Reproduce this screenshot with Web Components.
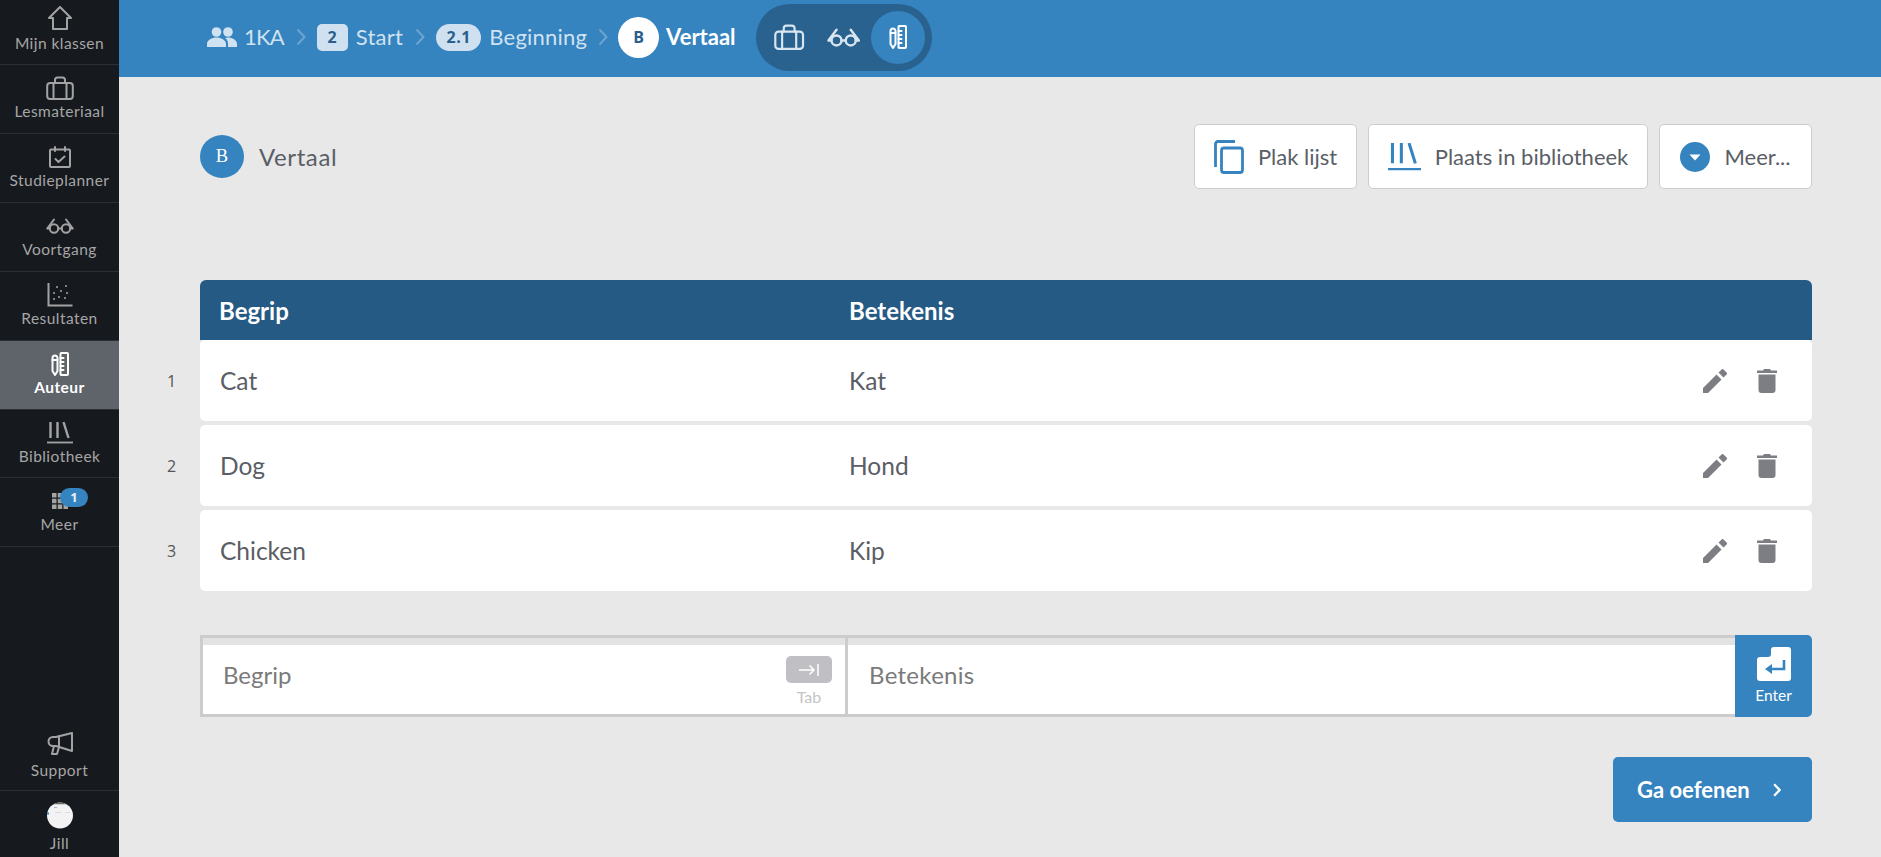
<!DOCTYPE html>
<html lang="nl"><head><meta charset="utf-8"><title>Vertaal</title>
<style>
html,body{margin:0;height:100%;overflow:hidden}
body{font-family:Lato,"Noto Sans",sans-serif;background:#e8e8e8}
</style></head><body>
<app-shell>
  <side-nav slot="nav">
    <nav-item icon="home" label="Mijn klassen" h="65" ih="36" lm="-3"></nav-item>
    <nav-item icon="case" label="Lesmateriaal"></nav-item>
    <nav-item icon="cal" label="Studieplanner"></nav-item>
    <nav-item icon="glasses" label="Voortgang"></nav-item>
    <nav-item icon="chart" label="Resultaten"></nav-item>
    <nav-item icon="ruler" label="Auteur" active></nav-item>
    <nav-item icon="lib" label="Bibliotheek" h="68"></nav-item>
    <nav-item icon="grid" label="Meer" badge="1"></nav-item>
    <nav-item slot="bottom" icon="mega" label="Support" h="70" ih="44" lm="-5"></nav-item>
    <nav-item slot="bottom" icon="avatar" label="Jill" h="66" ih="48" lm="-6" plain></nav-item>
  </side-nav>
  <top-bar slot="top">
    <bread-crumb icon="people" label="1KA"></bread-crumb>
    <bread-crumb badge="2" label="Start" sep></bread-crumb>
    <bread-crumb badge="2.1" round label="Beginning" sep></bread-crumb>
    <bread-crumb circle="B" label="Vertaal" sep current></bread-crumb>
    <mode-switch></mode-switch>
  </top-bar>
  <page-head>
    <tool-button icon="copy" label="Plak lijst" w="163"></tool-button>
    <tool-button icon="lib" label="Plaats in bibliotheek" w="280"></tool-button>
    <tool-button icon="more" label="Meer..." w="153"></tool-button>
  </page-head>
  <word-table>
    <word-row n="1" term="Cat" meaning="Kat"></word-row>
    <word-row n="2" term="Dog" meaning="Hond"></word-row>
    <word-row n="3" term="Chicken" meaning="Kip"></word-row>
  </word-table>
  <entry-bar></entry-bar>
  <go-button></go-button>
</app-shell>
<script>
const S='fill="none" stroke="currentColor" stroke-width="2" stroke-linejoin="round" stroke-linecap="round"';
const ICONS={
home:[24,24,`<path ${S} d="M12 1 L23 12 H19 V23 H5 V12 H1 Z"/>`],
case:[28,24,`<g ${S}><rect x="1.2" y="7" width="25.6" height="16" rx="3"/><path d="M9 7V4a2.5 2.5 0 0 1 2.500-2.500h5A2.500 2.500 0 0 1 19 4v3M7.500 7v16M20.500 7v16"/></g>`],
cal:[22,22,`<g ${S} stroke-width="1.600"><rect x="1" y="3.500" width="20" height="17.500" rx="1"/><path d="M6 1v4M16 1v4M6.500 13l3 3 6-5.500"/></g>`],
glasses:[28,16,`<g ${S} stroke-width="1.800"><circle cx="8" cy="10.500" r="4.200"/><circle cx="20" cy="10.500" r="4.200"/><path d="M12.200 10.500h3.600M3.800 10.500H1.200L8 1.500M24.200 10.500h2.600L20 1.500"/></g>`],
chart:[26,24,`<path fill="none" stroke="currentColor" stroke-width="2" d="M1.500 0V22.500H25.500"/><g fill="currentColor"><circle cx="10" cy="4" r="1"/><circle cx="19" cy="3" r="1"/><circle cx="14" cy="8" r="1"/><circle cx="7" cy="10" r="1"/><circle cx="20" cy="10" r="1"/><circle cx="12" cy="14" r="1"/><circle cx="7" cy="16" r="1"/><circle cx="18" cy="15" r="1"/></g>`],
ruler:[18,24,`<g ${S} stroke-width="1.800"><path d="M1.500 6a2.500 2.500 0 0 1 5 0V19L4 23 1.500 19Z"/><path d="M1.500 8h5"/><rect x="9.500" y="1" width="7.500" height="22" rx=".8"/><path d="M9.500 6h3M9.500 10h3M9.500 14h3M9.500 18h3"/></g>`],
lib:[26,22,`<path fill="none" stroke="currentColor" stroke-width="2.400" d="M3.500 0V16M10.500 0V16M16.500 0L21.500 16"/><path fill="none" stroke="currentColor" stroke-width="1.800" d="M0 20.500H26"/>`],
grid:[16,16,`<g fill="currentColor"><rect width="4.500" height="4.500"/><rect x="5.750" width="4.500" height="4.500"/><rect x="11.500" width="4.500" height="4.500"/><rect y="5.750" width="4.500" height="4.500"/><rect x="5.750" y="5.750" width="4.500" height="4.500"/><rect x="11.500" y="5.750" width="4.500" height="4.500"/><rect y="11.500" width="4.500" height="4.500"/><rect x="5.750" y="11.500" width="4.500" height="4.500"/><rect x="11.500" y="11.500" width="4.500" height="4.500"/></g>`],
mega:[26,23,`<g ${S} stroke-width="2"><path d="M25 1V19L9 14H6A4.500 4.500 0 0 1 6 5H9Z"/><path d="M12 4V15M7 14 5 22H10L12 15"/></g>`],
people:[30,20,`<g fill="currentColor"><circle cx="9.500" cy="5" r="4.800"/><circle cx="21" cy="5" r="4.800"/><path d="M0 20v-3c0-4 5-6.500 9.500-6.500S19 13 19 17v3Z"/><path d="M21 20v-3.500c0-2.200-1-4.200-3-5.500 1-.3 2-.5 3-.5 4.200 0 9 2.500 9 6.500v3Z"/></g>`],
copy:[30,34,`<g fill="none" stroke="currentColor" stroke-width="2.800"><path d="M1.500 27V4a2.500 2.500 0 0 1 2.500-2.500H21"/><rect x="7.500" y="8" width="21" height="24.500" rx="2.500"/></g>`],
more:[30,30,`<circle cx="15" cy="15" r="15" fill="currentColor"/><path d="M9.500 12.500h11L15 18.500Z" fill="#fff"/>`],
pencil:[24,24,`<path fill="currentColor" d="M0 19V24H5L18.500 10.500 13.500 5.500ZM23.600 5.400a1.300 1.300 0 0 0 0-1.900L20.500.4a1.300 1.300 0 0 0-1.900 0L15.500 3.500l5 5Z"/>`],
trash:[20,24,`<path fill="currentColor" d="M7 0h6l1 1.500h6V4H0V1.500h6ZM1.500 5.500h17V21a3 3 0 0 1-3 3h-11a3 3 0 0 1-3-3Z"/>`],
tab:[20,12,`<path fill="none" stroke="currentColor" stroke-width="1.500" d="M0 6H15M10.500 1.500 15 6l-4.500 4.500M19 0V12"/>`],
enter:[34,34,`<path fill="#fff" d="M14 3a3 3 0 0 1 3-3H31a3 3 0 0 1 3 3V31a3 3 0 0 1-3 3H3a3 3 0 0 1-3-3V13a3 3 0 0 1 3-3H11a3 3 0 0 0 3-3Z"/><path fill="none" stroke="#3583bf" stroke-width="2.600" d="M27 13V22H11"/><path fill="#3583bf" d="M15 17V27L8 22Z"/>`],
chev:[10,18,`<path fill="none" stroke="currentColor" stroke-width="2" d="M1.500 1.500 8.500 9 1.500 16.500"/>`],
chevb:[10,18,`<path fill="none" stroke="currentColor" stroke-width="3" d="M1.500 1.500 8.500 9 1.500 16.500"/>`],
avatar:[26,27,`<circle cx="13" cy="13.500" r="13" fill="#f3f3f3"/><path d="M6.500 2.300A13 13 0 0 1 19.500 2.300Z" fill="#6a6a6a"/><rect x="7" y="5" width="3" height="1" fill="#9dbcd8"/><rect x="8" y="10" width="6" height="1" fill="#d5dfea"/><rect x="18" y="10" width="5" height="1" fill="#d5dfea"/><rect x="0" y="10.500" width="2" height="2" fill="#3583bf"/>`]
};
const svg=(n,h)=>{const[w,ih,b]=ICONS[n];const H=h||ih;return `<svg xmlns="http://www.w3.org/2000/svg" viewBox="0 0 ${w} ${ih}" width="${w*H/ih}" height="${H}" style="display:block;flex:none" aria-hidden="true">${b}</svg>`};
function def(name,render){customElements.define(name,class extends HTMLElement{constructor(){super();this.attachShadow({mode:'open'})}connectedCallback(){this.shadowRoot.innerHTML=render(this)}})}

def('app-shell',()=>`<style>
:host{display:grid;grid-template-columns:119px 1fr;grid-template-rows:77px 1fr;width:100vw;height:100vh;overflow:hidden}
::slotted([slot=nav]){grid-row:1/3}
main{padding:47px 69px 0 81px;min-width:0}
</style><slot name="nav"></slot><slot name="top"></slot><main><slot></slot></main>`);

def('side-nav',()=>`<style>
:host{display:flex;flex-direction:column;background:#16191e;height:100%}
.g{flex:1}
</style><slot></slot><div class="g"></div><slot name="bottom"></slot>`);

def('nav-item',e=>{
 const g=n=>e.getAttribute(n);
 const l=g('label'),ic=g('icon'),a=e.hasAttribute('active'),p=e.hasAttribute('plain'),b=g('badge');
 return `<style>
:host{display:flex;flex-direction:column;align-items:center;box-sizing:border-box;position:relative;
height:${g('h')||69}px;border-bottom:${p?0:1}px solid #2b3037;
font:${a?700:400} 15.500px/20px Lato,"Noto Sans",sans-serif;letter-spacing:.45px;color:${a?'#fff':'#a6a6a6'};background:${a?'#5f636a':'transparent'}}
.i{height:${g('ih')||46}px;display:flex;align-items:center;justify-content:center;color:${a?'#fff':'#a3a3a3'}}
span{margin-top:${g('lm')||-10}px;white-space:nowrap}
.b{position:absolute;left:60px;top:10px;width:28px;height:19px;border-radius:10px;background:#3583bf;color:#e6f0f8;font:700 13px/19px "Open Sans",sans-serif;letter-spacing:0;text-align:center}
</style><div class="i">${svg(ic)}</div><span>${l}</span>${b?`<div class="b">${b}</div>`:''}`});

def('top-bar',()=>`<style>
:host{display:flex;align-items:center;background:#3583bf;padding:0 0 3px 88px;box-sizing:border-box;height:77px}
</style><slot></slot>`);

def('bread-crumb',e=>{
 const l=e.getAttribute('label'),ic=e.getAttribute('icon'),bd=e.getAttribute('badge'),c=e.getAttribute('circle'),sep=e.hasAttribute('sep'),cur=e.hasAttribute('current'),rd=e.hasAttribute('round');
 return `<style>
:host{display:flex;align-items:center;font:${cur?700:400} 22px/1 Lato,"Noto Sans",sans-serif;letter-spacing:${ic?'-.8px':cur?'0':'.2px'};color:${cur?'#fff':'#cfe2f1'}}
.s{color:#6ea4d0;margin:0 ${c?10:11}px 0 ${c?11:12}px}
.b{box-sizing:border-box;height:27px;min-width:31px;padding:0 ${rd?10.500:0}px;border-radius:${rd?14:5}px;background:#cfe1f0;color:#2a5f8d;font:700 16px/27px "Open Sans",sans-serif;text-align:center;margin-right:8px;letter-spacing:.5px}
.c{width:41px;height:41px;border-radius:50%;background:#fff;color:#2a5f8d;font:700 16px/41px "Open Sans",sans-serif;letter-spacing:0;text-align:center;margin-right:7px}
.p{margin-right:7px}
</style>${sep?`<span class="s">${svg('chev')}</span>`:''}${ic?`<span class="p">${svg(ic)}</span>`:''}${bd?`<span class="b">${bd}</span>`:''}${c?`<span class="c">${c}</span>`:''}<span>${l}</span>`});

def('mode-switch',()=>`<style>
:host{display:flex;height:67px;box-sizing:border-box;padding:7px;border-radius:34px;background:#29618f;margin-left:20px;color:#d8e6f1}
div{width:54px;height:53px;display:flex;align-items:center;justify-content:center;border-radius:50%}
.a{background:#3583bf;color:#fff}
</style><div>${svg('case',26)}</div><div>${svg('glasses',19)}</div><div class="a">${svg('ruler',24)}</div>`);

def('page-head',()=>`<style>
:host{display:flex;align-items:center;height:65px;gap:11px}
.c{width:44px;height:43px;border-radius:50%;background:#3583bf;color:#fff;font:400 18.500px/43px "Liberation Serif",serif;text-align:center;flex:none}
.t{font:400 24px/1 Lato,"Noto Sans",sans-serif;color:#5a5e66;margin-left:4px;flex:1;letter-spacing:.6px}
</style><div class="c">B</div><div class="t">Vertaal</div><slot></slot>`);

def('tool-button',e=>`<style>
:host{display:flex;align-items:center;justify-content:center;gap:14px;box-sizing:border-box;height:65px;width:${e.getAttribute('w')}px;background:#fff;border:1px solid #ccc;border-radius:5px;color:#3583bf;font:400 22px/1 Lato,"Noto Sans",sans-serif}
span{color:#5a5e66}
</style>${svg(e.getAttribute('icon'),e.getAttribute('icon')==='lib'?28:e.getAttribute('icon')==='more'?30:34)}<span>${e.getAttribute('label')}</span>`);

def('word-table',()=>`<style>
:host{display:flex;flex-direction:column;gap:4px;margin-top:91px}
.h{display:grid;grid-template-columns:630px 1fr;box-sizing:border-box;height:60px;margin-bottom:-4px;align-items:center;background:#255a84;color:#fff;border-radius:6px 6px 0 0;font:700 24px/1 Lato,"Noto Sans",sans-serif;padding:2px 0 0 19px}
</style><div class="h"><span>Begrip</span><span>Betekenis</span></div><slot></slot>`);

def('word-row',e=>`<style>
:host{display:grid;grid-template-columns:629px 1fr auto;align-items:center;box-sizing:border-box;height:81px;background:#fff;border-radius:5px;padding:1px 35px 0 20px;position:relative;font:400 24.500px/1 Lato,"Noto Sans",sans-serif;color:#5a5e66}
.n{position:absolute;left:-33px;top:50%;transform:translateY(-50%);font:400 16px/1 "Open Sans",sans-serif;color:#555}
.a{display:flex;gap:30px;align-items:center;color:#7c7e83}
</style><span class="n">${e.getAttribute('n')}</span><span>${e.getAttribute('term')}</span><span>${e.getAttribute('meaning')}</span><div class="a">${svg('pencil')}${svg('trash')}</div>`);

def('entry-bar',()=>`<style>
:host{display:flex;height:82px;margin-top:44px;font:400 24px/1 Lato,"Noto Sans",sans-serif;color:#7a7a7a}
.f{flex:1;display:flex;align-items:center;box-sizing:border-box;background:linear-gradient(#e3e3e3 7px,#fff 7px);border:3px solid #ccc;padding:0 0 2px 20px;position:relative}
.f1{flex:none;width:648px}
.f2{border-left:0;border-right:0;padding-left:21px;letter-spacing:.3px}
.tab{position:absolute;left:583px;top:18px;width:46px;text-align:center;color:#c4c4c8;font:400 16px/1 Lato,sans-serif}
.k{height:27px;border-radius:5px;background:#c0c0c4;color:#fff;display:flex;align-items:center;justify-content:center;margin-bottom:6px}
.e{width:77px;flex:none;background:#3583bf;color:#fff;border-radius:0 5px 5px 0;display:flex;flex-direction:column;align-items:center;justify-content:flex-end;padding-bottom:14px;box-sizing:border-box;font:400 15.500px/1 Lato,sans-serif;gap:7px}
</style><div class="f f1">Begrip<div class="tab"><div class="k">${svg('tab')}</div>Tab</div></div><div class="f f2">Betekenis</div><div class="e">${svg('enter')}Enter</div>`);

def('go-button',()=>`<style>
:host{display:flex;align-items:center;justify-content:space-between;box-sizing:border-box;width:199px;height:65px;margin:40px 0 0 auto;padding:0 31px 0 24px;border-radius:5px;background:#3583bf;color:#fff;font:700 22px/1 Lato,sans-serif}
</style><span>Ga oefenen</span>${svg('chevb',14)}`);
</script></body></html>
